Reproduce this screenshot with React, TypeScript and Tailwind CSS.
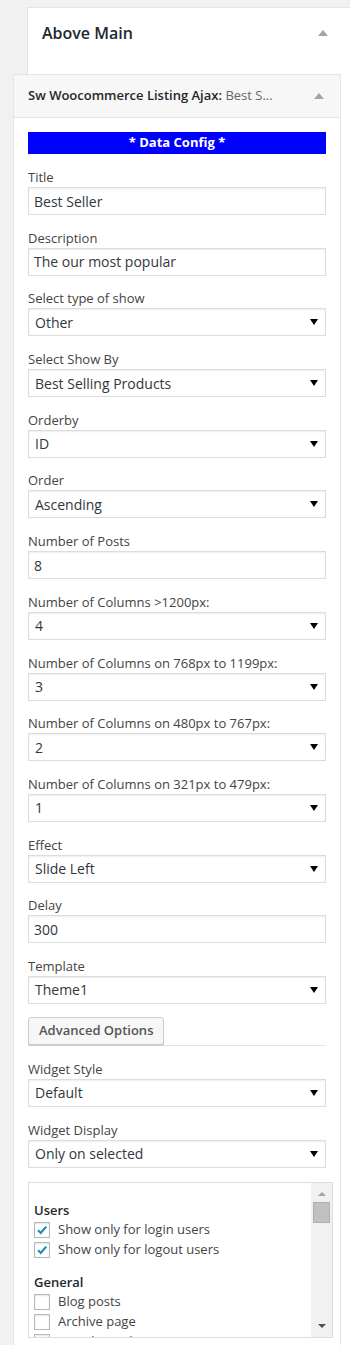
import React from "react";

type Field = { label: string; value: string; select?: boolean };

const fields: Field[] = [
  { label: "Title", value: "Best Seller" },
  { label: "Description", value: "The our most popular" },
  { label: "Select type of show", value: "Other", select: true },
  { label: "Select Show By", value: "Best Selling Products", select: true },
  { label: "Orderby", value: "ID", select: true },
  { label: "Order", value: "Ascending", select: true },
  { label: "Number of Posts", value: "8" },
  { label: "Number of Columns >1200px:", value: "4", select: true },
  { label: "Number of Columns on 768px to 1199px:", value: "3", select: true },
  { label: "Number of Columns on 480px to 767px:", value: "2", select: true },
  { label: "Number of Columns on 321px to 479px:", value: "1", select: true },
  { label: "Effect", value: "Slide Left", select: true },
  { label: "Delay", value: "300" },
  { label: "Template", value: "Theme1", select: true },
];

const UpArrow = () => (
  <span className="block w-0 h-0 border-l-[5px] border-r-[5px] border-b-[6px] border-l-transparent border-r-transparent border-b-[#a0a5aa]" />
);

const FormField = ({ label, value, select }: Field) => (
  <div>
    <div className="h-[20px] leading-[20px] text-[13px] text-[#444]">{label}</div>
    <div className="h-[28px] border border-[#ddd] bg-white shadow-[inset_0_1px_2px_rgba(0,0,0,0.07)] flex items-center justify-between">
      <span className={`${select ? "pl-[6px]" : "pl-[5px]"} text-[14px] text-[#32373c]`}>{value}</span>
      {select && (
        <span className="mr-[7px] block w-0 h-0 border-l-[4px] border-r-[4px] border-t-[6px] border-l-transparent border-r-transparent border-t-black" />
      )}
    </div>
  </div>
);

const Check = ({ checked }: { checked?: boolean }) => (
  <span className="w-[16px] h-[16px] border border-[#b4b9be] bg-white shadow-[inset_0_1px_2px_rgba(0,0,0,0.1)] flex items-center justify-center shrink-0">
    {checked && (
      <svg width="12" height="12" viewBox="0 0 12 12">
        <path d="M2 6.2 L4.8 9 L10.2 2.6" fill="none" stroke="#1e8cbe" strokeWidth="2.2" />
      </svg>
    )}
  </span>
);

const Item = ({ text, checked }: { text: string; checked?: boolean }) => (
  <div className="flex items-center gap-[8px] h-[20px] text-[13px] text-[#444]">
    <Check checked={checked} />
    <span>{text}</span>
  </div>
);

export default function App() {
  return (
    <div className="w-[350px] h-[1345px] overflow-hidden bg-[#f1f1f1] pt-[7px] pl-[27px]" style={{ fontFamily: '"Open Sans", sans-serif' }}>
      <div className="bg-white border border-[#e5e5e5] w-[340px] h-[1400px]">
        <div className="flex items-center justify-between h-[50px] pl-[14px] pr-[38px]">
          <h2 className="text-[16px] font-semibold text-[#23282d]">Above Main</h2>
          <UpArrow />
        </div>

        {/* widget being edited */}
        <div className="mt-[16px] -ml-[15px] w-[328px] border border-[#e5e5e5] bg-white">
          <div className="h-[43px] bg-[#f7f7f7] border-b border-[#e5e5e5] flex items-center justify-between pl-[14px] pr-[16px]">
            <div className="text-[13px] font-semibold text-[#23282d] whitespace-nowrap">
              Sw Woocommerce Listing Ajax: <span className="font-normal text-[#666]">Best S...</span>
            </div>
            <UpArrow />
          </div>

          <div className="px-[14px] pt-[14px] pb-[10px]">
            <div className="h-[22px] bg-[#0000ff] text-white text-[13px] font-bold flex items-center justify-center">
              * Data Config *
            </div>

            <div className="mt-[13px] flex flex-col gap-[12.7px]">
              {fields.map((f) => (
                <FormField key={f.label} {...f} />
              ))}
            </div>

            <div className="mt-[13px] border-b border-[#e5e5e5]">
              <button className="h-[28px] px-[10px] bg-[#f7f7f7] border border-[#ccc] rounded-[3px] shadow-[0_1px_0_#ccc] text-[13px] font-semibold text-[#555]">
                Advanced Options
              </button>
            </div>

            <div className="mt-[13px] flex flex-col gap-[13px]">
              <FormField label="Widget Style" value="Default" select />
              <FormField label="Widget Display" value="Only on selected" select />
            </div>

            <div className="mt-[14px] w-[305px] h-[156px] border border-[#ddd] flex overflow-hidden">
              <div className="flex-1 pl-[5px] pt-[17px]">
                <div className="h-[20px] leading-[20px] text-[13px] font-semibold text-[#23282d]">Users</div>
                <Item text="Show only for login users" checked />
                <Item text="Show only for logout users" checked />
                <div className="mt-[12px] h-[20px] leading-[20px] text-[13px] font-semibold text-[#23282d]">General</div>
                <Item text="Blog posts" />
                <Item text="Archive page" />
                <Item text="Search results" />
              </div>
              <div className="w-[21px] bg-[#f1f1f1] flex flex-col items-center pt-[9px]">
                <span className="block w-0 h-0 border-l-[4px] border-r-[4px] border-b-[4px] border-l-transparent border-r-transparent border-b-[#a3a3a3]" />
                <div className="mt-[6px] w-[17px] h-[21px] bg-[#c1c1c1] border border-[#b0b0b0]" />
                <span className="mt-auto mb-[9px] block w-0 h-0 border-l-[4px] border-r-[4px] border-t-[4px] border-l-transparent border-r-transparent border-t-[#505050]" />
              </div>
            </div>
          </div>
        </div>
      </div>
    </div>
  );
}
